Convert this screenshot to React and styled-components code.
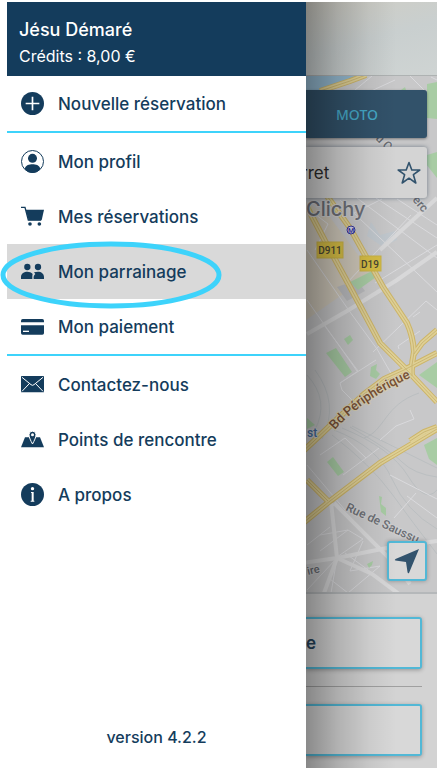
import React from "react";
import styled, { createGlobalStyle } from "styled-components";

const navy = "#143c5c";
const cyan = "#3dd3fb";

const GlobalStyle = createGlobalStyle`
  *, *::before, *::after { box-sizing: border-box; }
  body {
    margin: 0;
    background: #fff;
    color: ${navy};
    font-family: Inter, "Liberation Sans", sans-serif;
  }
`;

const Screen = styled.div`
  display: flex;
  min-height: 100vh;
  padding: 2px 0 0 7px;
`;

const Drawer = styled.aside`
  display: flex;
  flex: 0 0 299px;
  flex-direction: column;
  background: #fff;
`;

const Account = styled.header`
  padding: 16px 12px 9px;
  background: ${navy};
  color: #fff;
`;

const AccountName = styled.h1`
  margin: 0;
  font-size: 18px;
  font-weight: 500;
  line-height: 24px;
`;

const Credits = styled.p`
  margin: 0;
  padding-top: 3px;
  font-size: 16px;
  line-height: 22px;
`;

const Menu = styled.nav`
  flex: 1;
`;

const MenuGroup = styled.ul`
  margin: 0;
  padding: 0;
  list-style: none;

  & + & {
    padding-top: 1px;
    border-top: 2px solid ${cyan};
  }
`;

const MenuEntry = styled.li`
  position: relative;
`;

const MenuLink = styled.a`
  display: flex;
  align-items: center;
  gap: 14px;
  height: 55px;
  padding: 0 14px;
  background: ${({ $active }) => ($active ? "#d9d9d9" : "transparent")};
  color: ${navy};
  font-size: 17px;
  font-weight: 500;
  text-decoration: none;
`;

const MenuIcon = styled.svg`
  flex: none;
  width: 23px;
  height: 23px;
  fill: ${navy};
`;

const Highlight = styled.svg`
  position: absolute;
  top: -3px;
  left: -7px;
  width: 222px;
  height: 68px;
  fill: none;
  stroke: ${cyan};
  stroke-width: 5;
  pointer-events: none;
`;

const Version = styled.p`
  margin: 0;
  padding: 20px 0;
  font-size: 16px;
  font-weight: 500;
  line-height: 22px;
  text-align: center;
`;

const Booking = styled.main`
  position: relative;
  display: flex;
  flex: 1;
  flex-direction: column;
  min-width: 0;
  overflow: hidden;
  background: #d3d3d3;

  &::after {
    position: absolute;
    inset: 0 auto 0 0;
    width: 90px;
    background: linear-gradient(to right, rgba(0, 0, 0, 0.36), rgba(0, 0, 0, 0.18) 35%, rgba(0, 0, 0, 0.06) 70%, transparent);
    content: "";
    pointer-events: none;
  }
`;

const TopBar = styled.div`
  height: 74px;
  border-bottom: 1px solid #aeb2b2;
  background: linear-gradient(165deg, #cfcdc4, #c9cfcf 50%, #cfd4d3);
`;

const MapArea = styled.section`
  position: relative;
  display: flex;
  flex: 1;
  flex-direction: column;
  padding: 14px 10px 11px 0;
  border-bottom: 2px solid #b5b8ba;
`;

const MapCanvas = styled.svg`
  position: absolute;
  inset: 0;
  width: 100%;
  height: 100%;
  background: #c8c8c9;
`;

const Tab = styled.button`
  position: relative;
  height: 48px;
  padding: 0 19px 0 0;
  border: 0;
  border-radius: 0 3px 3px 0;
  background: #32526a;
  color: #45a9c8;
  font: 500 14px "Noto Sans", sans-serif;
  box-shadow: 0 1px 3px rgba(0, 0, 0, 0.4);
`;

const SearchBox = styled.div`
  position: relative;
  display: flex;
  align-items: center;
  height: 51px;
  margin-top: 9px;
  padding-right: 6px;
  border-radius: 0 3px 3px 0;
  background: #d4d4d4;
  box-shadow: 0 0 4px rgba(40, 60, 80, 0.55);
`;

const AddressInput = styled.input`
  flex: 1;
  min-width: 0;
  padding: 0;
  border: 0;
  background: transparent;
  color: #2b2b2b;
  font: 400 17px Inter, sans-serif;
  text-indent: -5px;
`;

const IconButton = styled.button`
  display: grid;
  padding: 0;
  border: 0;
  background: transparent;
`;

const LocateButton = styled.button`
  position: relative;
  display: grid;
  place-items: center;
  width: 40px;
  height: 40px;
  margin: auto 0 0 auto;
  padding: 0;
  border: 2px solid #52b8d6;
  border-radius: 3px;
  background: #d8d8d8;
  box-shadow: 0 0 4px rgba(0, 0, 0, 0.3);
`;

const Actions = styled.section`
  display: flex;
  flex-direction: column;
  padding: 23px 15px 12px 0;
`;

const ActionButton = styled.button`
  height: 52px;
  padding: 0;
  border: 2px solid #52b8d6;
  border-left: 0;
  border-radius: 0 3px 3px 0;
  background: #d8d8d8;
  color: #27455d;
  font: 600 17px Inter, sans-serif;
  text-align: left;
  box-shadow: 0 1px 4px rgba(0, 0, 0, 0.3);
`;

const Divider = styled.hr`
  width: 100%;
  height: 1px;
  margin: 17px 0;
  border: 0;
  background: #a0a0a0;
`;

const icons = {
  add: (
    <>
      <circle cx="34.5" cy="34.5" r="34.5" />
      <path d="M34.5 14V55M14 34.5H55" stroke="#fff" strokeWidth="5" />
    </>
  ),
  profile: (
    <>
      <circle cx="34.5" cy="34.5" r="33" fill="#fff" stroke={navy} strokeWidth="3" />
      <circle cx="34.5" cy="25" r="13.5" />
      <path d="M11 57C14 45 25 43 34.5 43S55 45 58 57Q48 69 34.5 69T11 57Z" />
    </>
  ),
  cart: (
    <>
      <path d="M0 7H12L22 45H60" fill="none" stroke={navy} strokeWidth="4" />
      <path d="M14 14H69L62 46H23Z" />
      <circle cx="27" cy="57" r="5.5" />
      <circle cx="55" cy="57" r="5.5" />
    </>
  ),
  people: (
    <>
      <circle cx="19" cy="21" r="9.5" />
      <circle cx="51" cy="21" r="9.5" />
      <path d="M0 57V51C0 40 10 35 19 35C25 35 31 37 35 42C34 45 34 50 34 57Z" />
      <path d="M38 57C37 49 39 46 43 42L39 37Q44 35 51 35C61 35 69 41 69 51V57Z" />
    </>
  ),
  card: (
    <>
      <path d="M0 22V17Q0 12 5 12H64Q69 12 69 17V22Z" />
      <path d="M0 31H69V54Q69 59 64 59H5Q0 59 0 54Z" />
      <path d="M6 49H24" stroke="#fff" strokeWidth="4" />
    </>
  ),
  mail: (
    <>
      <rect y="9" width="69" height="49" rx="2" />
      <path d="M3 13L30 35Q34.5 39 39 35L66 13M3 55L25 32M66 55L44 32" fill="none" stroke="#fff" strokeWidth="3" />
    </>
  ),
  meeting: (
    <>
      <path d="M0 58L12 28H57L69 58Z" />
      <path d="M34.5 48C29 38 24 28 24 20A10.5 10.5 0 0 1 45 20C45 28 40 38 34.5 48Z" stroke="#fff" strokeWidth="3" />
      <circle cx="34.5" cy="20" r="4.5" fill="#fff" />
    </>
  ),
  about: (
    <>
      <circle cx="34.5" cy="34.5" r="34.5" />
      <circle cx="34.5" cy="17" r="5" fill="#fff" />
      <path d="M30 27H38V53H40V56H29V53H32V30H30Z" fill="#fff" />
    </>
  ),
};

const groups = [
  [{ id: "add", label: "Nouvelle réservation" }],
  [
    { id: "profile", label: "Mon profil" },
    { id: "cart", label: "Mes réservations" },
    { id: "people", label: "Mon parrainage", active: true },
    { id: "card", label: "Mon paiement" },
  ],
  [
    { id: "mail", label: "Contactez-nous" },
    { id: "meeting", label: "Points de rencontre" },
    { id: "about", label: "A propos" },
  ],
];

const greens = [
  "M427 84L437 82V119L427 118Z",
  "M401 90L405 87L406 90Z",
  "M427 155L437 152V178L426 164Z",
  "M350 282L372 271L376 277L358 290Z",
  "M326 353L336 348L352 372L345 377Z",
  "M344 339L350 335L353 340L348 345Z",
  "M419 375L437 362V388Z",
  "M371 367L377 364L376 370L380 374L376 379L370 376Z",
  "M307 418L315 425L307 429Z",
  "M327 462L333 457L344 472L338 476Z",
  "M424 445L437 438V465L429 459Z",
  "M379 496L382 497L381 504L386 508V516L381 512Z",
  "M367 564L373 561L372 565L369 568Z",
];

const highways = [
  "M307 207L325 241L349 285L380 343L404 367L437 402",
  "M327 196L350 228L383 287L407 323Q413 336 414 352Q411 366 412 376",
  "M300 454L314 441L334 422L364 394L384 379L404 370L437 353",
  "M414 354L422 343L437 330",
  "M303 523L330 501L380 463L437 429",
  "M307 480L328 501",
  "M410 441L424 432L437 427",
  "M320 91L350 81L366 75",
];

const streets = [
  "M307 250L350 312L377 349L392 375",
  "M307 300L357 371M324 325L358 371L340 383L376 360M340 383L342 390L354 402",
  "M373 352L426 301L437 310M399 349L398 346L420 331M413 317L420 312",
  "M340 200L437 292M357 198L437 258M376 198L437 238M397 199L437 225",
  "M345 285L411 215M375 283L437 245M307 208L328 224L315 250M350 215L382 199",
  "M355 90L372 76M369 92L395 80M410 76L424 90M431 77L437 80",
  "M307 465L345 510M320 455L345 438L366 458L343 475M366 458L379 448",
  "M307 545L330 527M320 535L348 530L320 551M348 530L363 539L337 557",
  "M307 590L337 558L331 593M345 553L398 592M361 554L407 543M363 541L350 571L380 566L348 593L330 579",
  "M380 440L396 426L414 419L410 410M390 475L437 499M407 496L437 518M416 493L394 518",
];

const avenues = [
  "M307 334L347 311L397 280L437 252",
  "M331 502L337 558L324 593M303 563L337 558L387 548L437 541M334 503L394 563L410 584M337 558L372 574L399 594",
  "M437 198L380 250",
];

const railways = [
  "M334 430Q378 447 392 479T437 529",
  "M342 428Q391 448 408 476T437 490",
  "M350 427Q390 450 402 462T437 477",
  "M352 426L437 468",
  "M332 435Q371 465 392 494T437 554",
  "M307 375Q330 400 315 430M315 370Q340 404 322 439M364 438C385 431 384 405 419 393",
];

function StreetMap() {
  return (
    <MapCanvas viewBox="306 76 131 516" preserveAspectRatio="xMinYMin slice" role="img" aria-label="Plan de Clichy">
      <path d="M306 202L329 216L376 279L346 292L306 320Z" fill="#cec7b9" />
      <path d="M306 76H357L320 92H306Z" fill="#94b9d0" />
      <path d="M371 222L380 235L395 231L397 240L383 247L367 236Z" fill="#c1c8ce" />
      <path d="M337 287L357 280L365 291L347 301Z" fill="#b9babd" />
      {railways.map((d) => (
        <path key={d} d={d} fill="none" stroke="#bbbfc1" strokeWidth="1" />
      ))}
      {streets.map((d) => (
        <path key={d} d={d} fill="none" stroke="#dadadd" strokeWidth="1" />
      ))}
      {avenues.map((d) => (
        <path key={d} d={d} fill="none" stroke="#d8d8d9" strokeWidth="4" />
      ))}
      {greens.map((d) => (
        <path key={d} d={d} fill="#a8cca4" />
      ))}
      {highways.map((d) => (
        <path key={d} d={d} fill="none" stroke="#cdb568" strokeWidth="6" />
      ))}
      {highways.map((d) => (
        <path key={d} d={d} fill="none" stroke="#dfd096" strokeWidth="4" />
      ))}
      {highways.map((d) => (
        <path key={d} d={d} fill="none" stroke="#cbb773" strokeWidth="1" />
      ))}
      <path id="ring-road" d="M335 430Q361 400 412 377" fill="none" />
      <g fontFamily="Roboto, sans-serif" fontWeight="500" paintOrder="stroke" stroke="#cfcfd0" strokeWidth="2">
        <text x="306" y="216" fontFamily="Inter, sans-serif" fontSize="20" fill="#6d7078">Clichy</text>
        <text fontSize="13" fill="#775035" stroke="#d8cfb0">
          <textPath href="#ring-road">Bd Périphérique</textPath>
        </text>
        <text transform="translate(345 510) rotate(25)" fontSize="12" fill="#6b6e74">Rue de Saussu</text>
        <text transform="translate(308 575) rotate(-13)" fontSize="11" fill="#6b6e74">ire</text>
        <text transform="translate(375 139) rotate(45)" fontSize="12" fill="#6b6e74">u C</text>
        <text transform="translate(412 200) rotate(50)" fontSize="12" fill="#6b6e74">erc</text>
        <text x="307" y="437" fontSize="12" fill="#456c9d">st</text>
      </g>
      <circle cx="351" cy="230" r="4" fill="#d4d4e6" stroke="#3434a0" strokeWidth="1" />
      <g textAnchor="middle" fontFamily="Roboto, sans-serif" fontWeight="500" fill="#4a4733">
        <text x="351" y="233" fontSize="7" fill="#3434a0">M</text>
        <rect x="317" y="242" width="26" height="16" fill="#d8bf45" stroke="#c9b346" />
        <text x="330" y="254" fontSize="10">D911</text>
        <rect x="360" y="256" width="21" height="15" fill="#d8bf45" stroke="#c9b346" />
        <text x="370" y="268" fontSize="10">D19</text>
      </g>
    </MapCanvas>
  );
}

export default function App() {
  return (
    <>
      <GlobalStyle />
      <Screen>
        <Drawer>
          <Account>
            <AccountName>Jésu Démaré</AccountName>
            <Credits>Crédits : 8,00 €</Credits>
          </Account>
          <Menu aria-label="Menu principal">
            {groups.map((items) => (
              <MenuGroup key={items[0].id}>
                {items.map(({ id, label, active }) => (
                  <MenuEntry key={id}>
                    <MenuLink href={`#${id}`} $active={active} aria-current={active ? "page" : undefined}>
                      <MenuIcon viewBox="0 0 69 69" aria-hidden="true">{icons[id]}</MenuIcon>
                      {label}
                    </MenuLink>
                    {active && (
                      <Highlight viewBox="0 0 222 68" aria-hidden="true">
                        <ellipse cx="111" cy="34" rx="108" ry="31" />
                      </Highlight>
                    )}
                  </MenuEntry>
                ))}
              </MenuGroup>
            ))}
          </Menu>
          <Version>version 4.2.2</Version>
        </Drawer>
        <Booking>
          <TopBar />
          <MapArea>
            <StreetMap />
            <Tab type="button">MOTO</Tab>
            <SearchBox>
              <AddressInput aria-label="Adresse de départ" defaultValue="rret" />
              <IconButton type="button" aria-label="Ajouter aux favoris">
                <svg width="24" height="24" viewBox="0 0 24 24" fill="none" stroke="#32536d" strokeWidth="1.6" strokeLinejoin="round">
                  <path d="M12 1.5L14.8 9H22.8L16.4 13.7L18.8 22L12 17.2L5.2 22L7.6 13.7L1.2 9H9.2Z" />
                </svg>
              </IconButton>
            </SearchBox>
            <LocateButton type="button" aria-label="Me localiser">
              <svg width="26" height="26" viewBox="0 0 26 26" fill="#32536d" aria-hidden="true">
                <path d="M25 1L15 25Q14 26 13.5 24L12 14L1.5 12.5Q0 12 1.5 11Z" />
              </svg>
            </LocateButton>
          </MapArea>
          <Actions>
            <ActionButton type="button">e</ActionButton>
            <Divider />
            <ActionButton type="button" aria-label="Valider" />
          </Actions>
        </Booking>
      </Screen>
    </>
  );
}
